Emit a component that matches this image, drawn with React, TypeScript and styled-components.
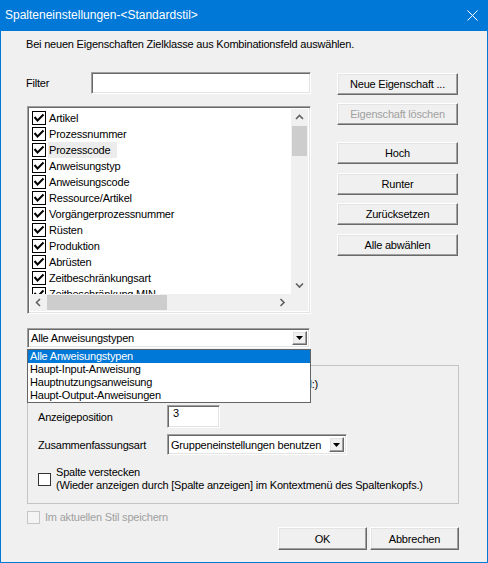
import React from "react";
import styled, { createGlobalStyle, css } from "styled-components";

const GlobalStyle = createGlobalStyle`
  html, body {
    margin: 0;
    padding: 0;
    background: #ffffff;
  }
  body {
    font-family: "Liberation Sans", Arial, sans-serif;
    font-size: 11px;
    letter-spacing: -0.2px;
    color: #000;
  }
  *, *::before, *::after {
    box-sizing: border-box;
  }
`;

const sunken = css`
  border: 1px solid;
  border-color: #a0a0a0 #ffffff #ffffff #a0a0a0;
  box-shadow: inset 1px 1px 0 #696969, inset -1px -1px 0 #e3e3e3;
`;

const raised = css`
  border: 1px solid;
  border-color: #ffffff #696969 #696969 #ffffff;
  box-shadow: inset -1px -1px 0 #a0a0a0, inset 1px 1px 0 #e3e3e3;
`;

const Window = styled.div`
  width: 488px;
  height: 563px;
  display: flex;
  flex-direction: column;
  background: #f0f0f0;
  border: 1px solid #0078d7;
  border-top: none;
`;

const TitleBar = styled.div`
  height: 31px;
  background: #0078d7;
  color: #fff;
  display: flex;
  align-items: center;
  justify-content: space-between;
  padding: 0 9px 1px 4px;
  font-family: "Liberation Sans", Arial, sans-serif;
  font-size: 12px;
  letter-spacing: 0;
`;

const Body = styled.div`
  flex: 1;
  display: flex;
  flex-direction: column;
  padding: 0 28px 0 26px;
`;

const Hint = styled.div`
  margin: 7px 0 0 -1px;
  line-height: 13px;
`;

const TopGrid = styled.div`
  margin-top: 21px;
  display: grid;
  grid-template-columns: 284px 121px;
  column-gap: 26px;
  align-items: start;
`;

const LeftCol = styled.div`
  display: flex;
  flex-direction: column;
`;

const FilterRow = styled.div`
  height: 22px;
  display: flex;
  align-items: center;
  justify-content: space-between;
  margin-left: -1px;
`;

const TextInput = styled.div<{ $width: number }>`
  ${sunken};
  width: ${(p) => p.$width}px;
  height: 22px;
  background: #fff;
  padding: 1px 5px;
  line-height: 13px;
`;

const ListBox = styled.div`
  ${sunken};
  margin-top: 12px;
  height: 208px;
  background: #fff;
  display: grid;
  grid-template-columns: 1fr 17px;
  grid-template-rows: 1fr 17px;
  padding: 2px;
`;

const ListItems = styled.div`
  overflow: hidden;
  padding: 1px 0 0 0;
`;

const ListRow = styled.div`
  height: 16px;
  display: flex;
  align-items: center;
  padding-left: 2px;
  white-space: nowrap;
`;

const ItemBox = styled.span`
  width: 14px;
  height: 14px;
  border: 1px solid #000;
  background: #fff;
  display: flex;
  align-items: center;
  justify-content: center;
  flex: none;
`;

const ItemText = styled.span<{ $focused?: boolean }>`
  margin-left: 2px;
  padding: 0 7px 0 1px;
  line-height: 16px;
  background: ${(p) => (p.$focused ? "#ececec" : "transparent")};
`;

const VScroll = styled.div`
  background: #f0f0f0;
  display: flex;
  flex-direction: column;
`;

const HScroll = styled.div`
  background: #f0f0f0;
  display: flex;
  align-items: stretch;
`;

const Corner = styled.div`
  background: #f0f0f0;
`;

const Arrow = styled.div`
  width: 17px;
  height: 17px;
  flex: none;
  display: flex;
  align-items: center;
  justify-content: center;
`;

const VThumb = styled.div`
  height: 30px;
  margin: 0 1px;
  background: #cdcdcd;
`;

const HThumb = styled.div`
  width: 120px;
  margin: 1px 0;
  background: #cdcdcd;
`;

const Spacer = styled.div`
  flex: 1;
`;

const ComboWrap = styled.div<{ $width: number; $top?: number }>`
  position: relative;
  width: ${(p) => p.$width}px;
  margin-top: ${(p) => p.$top ?? 0}px;
`;

const Combo = styled.div<{ $height: number }>`
  ${sunken};
  height: ${(p) => p.$height}px;
  background: #fff;
  display: flex;
  align-items: center;
  justify-content: space-between;
  padding: 2px 2px 2px 3px;
`;

const DropButton = styled.div`
  ${raised};
  width: 15px;
  height: 100%;
  background: #f0f0f0;
  display: flex;
  align-items: center;
  justify-content: center;
`;

const Popup = styled.div`
  position: absolute;
  top: 21px;
  left: 0;
  width: 284px;
  z-index: 10;
  background: #fff;
  border: 1px solid #646464;
`;

const PopupItem = styled.div<{ $selected?: boolean }>`
  height: 13px;
  line-height: 13px;
  padding-left: 2px;
  background: ${(p) => (p.$selected ? "#0078d7" : "transparent")};
  color: ${(p) => (p.$selected ? "#fff" : "#000")};
`;

const RightCol = styled.div`
  display: flex;
  flex-direction: column;
`;

const Button = styled.div<{ $top?: number; $width?: number; $height?: number; $disabled?: boolean }>`
  ${raised};
  width: ${(p) => (p.$width ? `${p.$width}px` : "100%")};
  height: ${(p) => p.$height ?? 22}px;
  margin-top: ${(p) => p.$top ?? 0}px;
  background: #f0f0f0;
  display: flex;
  align-items: center;
  justify-content: center;
  color: ${(p) => (p.$disabled ? "#a0a0a0" : "#000")};
`;

const GroupBox = styled.div`
  margin-top: 17px;
  height: 139px;
  border: 1px solid #c4c4c4;
  padding: 0 10px;
  display: flex;
  flex-direction: column;
`;

const GroupLine = styled.div`
  margin-top: 12px;
  width: 280px;
  line-height: 13px;
  white-space: nowrap;
  text-align: right;
`;

const FieldRow = styled.div<{ $top: number }>`
  margin-top: ${(p) => p.$top}px;
  display: grid;
  grid-template-columns: 129px auto;
  align-items: center;
  justify-items: start;
`;

const PositionInput = styled(TextInput)`
  height: 23px;
`;

const CheckRow = styled.div<{ $top: number }>`
  margin-top: ${(p) => p.$top}px;
  display: flex;
  align-items: center;
  gap: 5px;
`;

const Box = styled.span<{ $disabled?: boolean }>`
  width: 13px;
  height: 13px;
  flex: none;
  background: ${(p) => (p.$disabled ? "#f4f4f4" : "#fff")};
  border: 1px solid ${(p) => (p.$disabled ? "#c6c6c6" : "#333")};
`;

const CheckText = styled.div<{ $disabled?: boolean }>`
  line-height: 13px;
  color: ${(p) => (p.$disabled ? "#a0a0a0" : "#000")};
`;

const Footer = styled.div`
  margin-top: 3px;
  display: flex;
  justify-content: flex-end;
  gap: 3px;
`;

const Chevron = ({ dir }: { dir: "up" | "down" | "left" | "right" }) => {
  const pts = {
    up: "1,5 4.5,1.5 8,5",
    down: "1,1.5 4.5,5 8,1.5",
    left: "5,1 1.5,4.5 5,8",
    right: "1.5,1 5,4.5 1.5,8",
  }[dir];
  const vertical = dir === "up" || dir === "down";
  return (
    <svg width={vertical ? 9 : 7} height={vertical ? 7 : 9}>
      <polyline points={pts} fill="none" stroke="#606060" strokeWidth="1.6" />
    </svg>
  );
};

const Tick = () => (
  <svg width="12" height="12" viewBox="0 0 12 12">
    <polyline points="1.5,5 4.5,8.5 10.5,2.5" fill="none" stroke="#000" strokeWidth="2" />
  </svg>
);

const DownTriangle = () => (
  <svg width="7" height="4">
    <polygon points="0,0 7,0 3.5,4" fill="#000" />
  </svg>
);

const columns = [
  "Artikel",
  "Prozessnummer",
  "Prozesscode",
  "Anweisungstyp",
  "Anweisungscode",
  "Ressource/Artikel",
  "Vorgängerprozessnummer",
  "Rüsten",
  "Produktion",
  "Abrüsten",
  "Zeitbeschränkungsart",
  "Zeitbeschränkung MIN",
  "Zeitbeschränkung MAX",
];

const instructionTypes = [
  "Alle Anweisungstypen",
  "Haupt-Input-Anweisung",
  "Hauptnutzungsanweisung",
  "Haupt-Output-Anweisungen",
];

const sideButtons = [
  { label: "Neue Eigenschaft ...", top: 1 },
  { label: "Eigenschaft löschen", top: 8, disabled: true },
  { label: "Hoch", top: 17 },
  { label: "Runter", top: 9 },
  { label: "Zurücksetzen", top: 8 },
  { label: "Alle abwählen", top: 9 },
];

export default function App() {
  return (
    <>
      <GlobalStyle />
      <Window>
        <TitleBar>
          <span>Spalteneinstellungen-&lt;Standardstil&gt;</span>
          <svg width="11" height="11" viewBox="0 0 11 11">
            <path d="M0.5 0.5 L10.5 10.5 M10.5 0.5 L0.5 10.5" stroke="#fff" strokeWidth="1" />
          </svg>
        </TitleBar>
        <Body>
          <Hint>Bei neuen Eigenschaften Zielklasse aus Kombinationsfeld auswählen.</Hint>
          <TopGrid>
            <LeftCol>
              <FilterRow>
                <span>Filter</span>
                <TextInput $width={220} />
              </FilterRow>
              <ListBox>
                <ListItems>
                  {columns.map((c) => (
                    <ListRow key={c}>
                      <ItemBox>
                        <Tick />
                      </ItemBox>
                      <ItemText $focused={c === "Prozesscode"}>{c}</ItemText>
                    </ListRow>
                  ))}
                </ListItems>
                <VScroll>
                  <Arrow>
                    <Chevron dir="up" />
                  </Arrow>
                  <VThumb />
                  <Spacer />
                  <Arrow>
                    <Chevron dir="down" />
                  </Arrow>
                </VScroll>
                <HScroll>
                  <Arrow>
                    <Chevron dir="left" />
                  </Arrow>
                  <HThumb />
                  <Spacer />
                  <Arrow>
                    <Chevron dir="right" />
                  </Arrow>
                </HScroll>
                <Corner />
              </ListBox>
              <ComboWrap $width={283} $top={14}>
                <Combo $height={20}>
                  <span>Alle Anweisungstypen</span>
                  <DropButton>
                    <DownTriangle />
                  </DropButton>
                </Combo>
                <Popup>
                  {instructionTypes.map((t, i) => (
                    <PopupItem key={t} $selected={i === 0}>
                      {t}
                    </PopupItem>
                  ))}
                </Popup>
              </ComboWrap>
            </LeftCol>
            <RightCol>
              {sideButtons.map((b) => (
                <Button key={b.label} $top={b.top} $disabled={b.disabled}>
                  {b.label}
                </Button>
              ))}
            </RightCol>
          </TopGrid>
          <GroupBox>
            <GroupLine>Einstellungen für die Zielklasse (Standard:)</GroupLine>
            <FieldRow $top={14}>
              <span>Anzeigeposition</span>
              <PositionInput $width={53}>3</PositionInput>
            </FieldRow>
            <FieldRow $top={6}>
              <span>Zusammenfassungsart</span>
              <ComboWrap $width={180}>
                <Combo $height={21}>
                  <span>Gruppeneinstellungen benutzen</span>
                  <DropButton>
                    <DownTriangle />
                  </DropButton>
                </Combo>
              </ComboWrap>
            </FieldRow>
            <CheckRow $top={11}>
              <Box />
              <CheckText>
                Spalte verstecken
                <br />
                (Wieder anzeigen durch [Spalte anzeigen] im Kontextmenü des Spaltenkopfs.)
              </CheckText>
            </CheckRow>
          </GroupBox>
          <CheckRow $top={7}>
            <Box $disabled />
            <CheckText $disabled>Im aktuellen Stil speichern</CheckText>
          </CheckRow>
          <Footer>
            <Button $width={89} $height={23}>
              OK
            </Button>
            <Button $width={89} $height={23}>
              Abbrechen
            </Button>
          </Footer>
        </Body>
      </Window>
    </>
  );
}
